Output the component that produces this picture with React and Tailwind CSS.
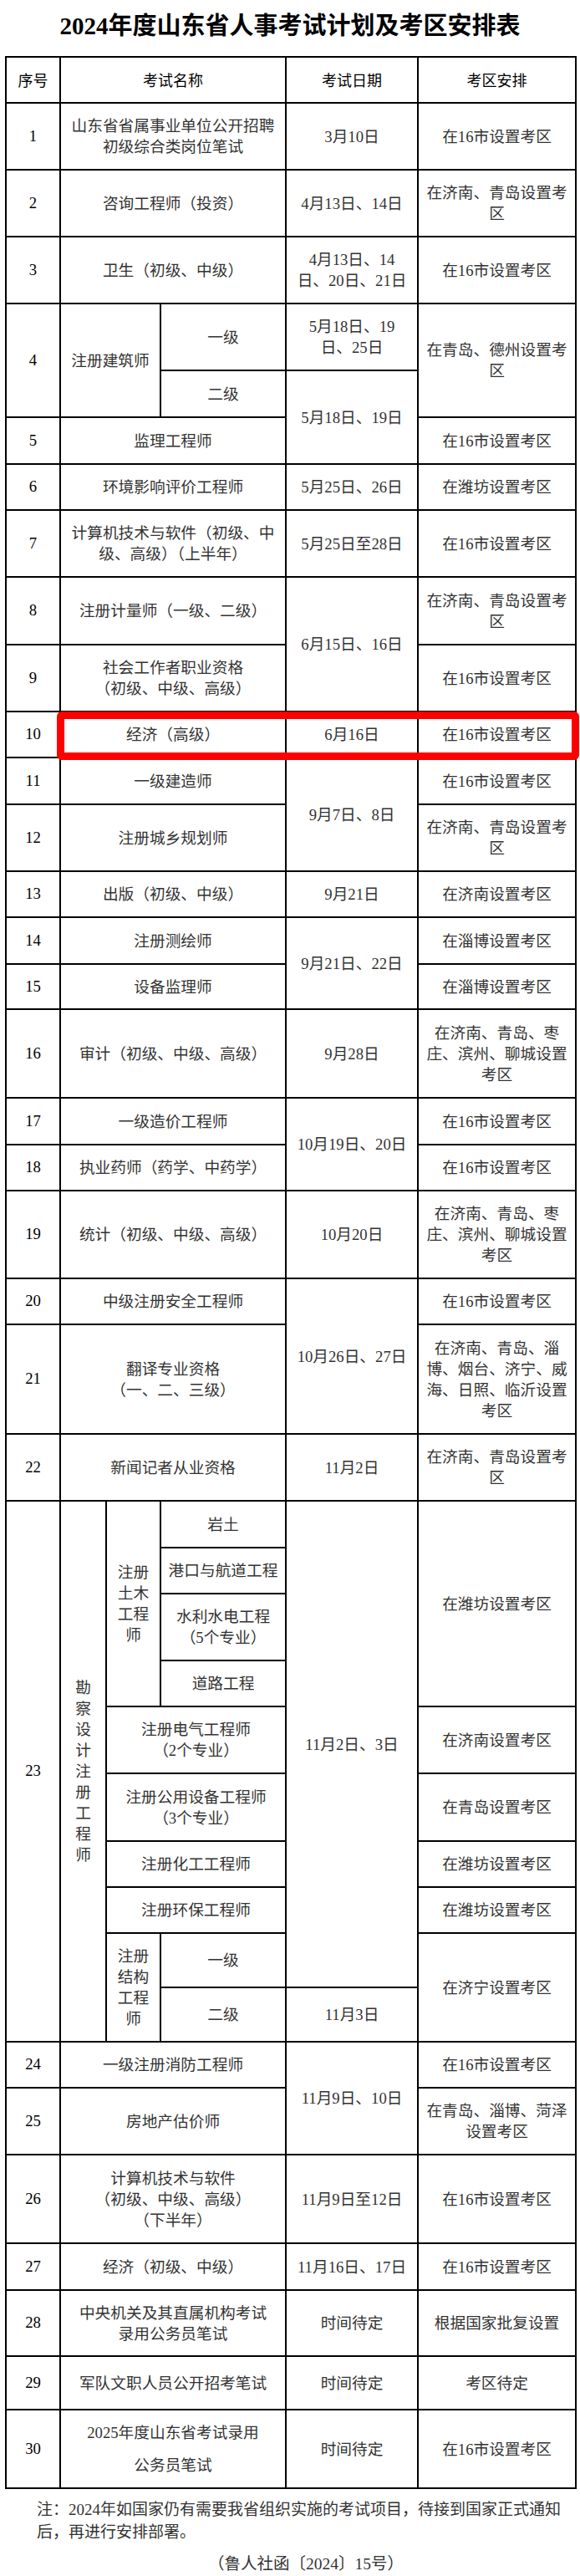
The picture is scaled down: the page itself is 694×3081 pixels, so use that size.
import { Fragment } from 'react';

const font = "[font-family:'Liberation_Serif','Noto_Sans_CJK_SC',serif]";
const td = 'border-2 border-black text-center align-middle px-[4px] leading-[25px] text-[18.7px] text-[#333] whitespace-nowrap';
const tdWide = 'border-2 border-black text-center align-middle px-[4px] leading-[39px] text-[18.7px] text-[#333] whitespace-nowrap';
const no = 'border-2 border-black text-center align-middle text-[18.7px] text-black';
const head = "border-2 border-black text-center align-middle text-[18px] font-normal text-black [font-family:'Noto_Sans_CJK_SC',sans-serif]";

function Lines({ items }) {
  return items.map((l, i) => (
    <Fragment key={i}>
      {i > 0 && <br />}
      {l}
    </Fragment>
  ));
}

const jiQing = ['在济南、青岛设置考', '区'];
const fiveCity = ['在济南、青岛、枣', '庄、滨州、聊城设置', '考区'];

export default function App() {
  return (
    <div className={`w-[694px] min-h-[3081px] bg-white ${font}`}>
      <h1 className="text-center text-[29px] font-bold leading-[35px] pt-[14px] pb-[18px] text-black">
        2024年度山东省人事考试计划及考区安排表
      </h1>

      <table className="ml-[6px] w-[682px] table-fixed border-collapse">
        <colgroup>
          <col className="w-[65px]" />
          <col className="w-[55px]" />
          <col className="w-[65px]" />
          <col className="w-[150px]" />
          <col className="w-[158px]" />
          <col className="w-[189px]" />
        </colgroup>
        <thead>
          <tr className="h-[55px]">
            <th className={head}>序号</th>
            <th colSpan={3} className={head}>考试名称</th>
            <th className={head}>考试日期</th>
            <th className={head}>考区安排</th>
          </tr>
        </thead>
        <tbody>
          <tr className="h-[80px]">
            <td className={no}>1</td>
            <td colSpan={3} className={td}><Lines items={['山东省省属事业单位公开招聘', '初级综合类岗位笔试']} /></td>
            <td className={td}>3月10日</td>
            <td className={td}>在16市设置考区</td>
          </tr>
          <tr className="h-[80px]">
            <td className={no}>2</td>
            <td colSpan={3} className={td}>咨询工程师（投资）</td>
            <td className={td}>4月13日、14日</td>
            <td className={td}><Lines items={jiQing} /></td>
          </tr>
          <tr className="h-[80px]">
            <td className={no}>3</td>
            <td colSpan={3} className={td}>卫生（初级、中级）</td>
            <td className={td}><Lines items={['4月13日、14', '日、20日、21日']} /></td>
            <td className={td}>在16市设置考区</td>
          </tr>
          <tr className="h-[80px]">
            <td rowSpan={2} className={no}>4</td>
            <td rowSpan={2} colSpan={2} className={td}>注册建筑师</td>
            <td className={td}>一级</td>
            <td className={td}><Lines items={['5月18日、19', '日、25日']} /></td>
            <td rowSpan={2} className={td}><Lines items={['在青岛、德州设置考', '区']} /></td>
          </tr>
          <tr className="h-[56px]">
            <td className={td}>二级</td>
            <td rowSpan={2} className={td}>5月18日、19日</td>
          </tr>
          <tr className="h-[56px]">
            <td className={no}>5</td>
            <td colSpan={3} className={td}>监理工程师</td>
            <td className={td}>在16市设置考区</td>
          </tr>
          <tr className="h-[55px]">
            <td className={no}>6</td>
            <td colSpan={3} className={td}>环境影响评价工程师</td>
            <td className={td}>5月25日、26日</td>
            <td className={td}>在潍坊设置考区</td>
          </tr>
          <tr className="h-[80px]">
            <td className={no}>7</td>
            <td colSpan={3} className={td}><Lines items={['计算机技术与软件（初级、中', '级、高级）（上半年）']} /></td>
            <td className={td}>5月25日至28日</td>
            <td className={td}>在16市设置考区</td>
          </tr>
          <tr className="h-[81px]">
            <td className={no}>8</td>
            <td colSpan={3} className={td}>注册计量师（一级、二级）</td>
            <td rowSpan={2} className={td}>6月15日、16日</td>
            <td className={td}><Lines items={jiQing} /></td>
          </tr>
          <tr className="h-[80px]">
            <td className={no}>9</td>
            <td colSpan={3} className={td}><Lines items={['社会工作者职业资格', '（初级、中级、高级）']} /></td>
            <td className={td}>在16市设置考区</td>
          </tr>
          <tr className="h-[55px]">
            <td className={no}>10</td>
            <td colSpan={3} className={`${td} relative`}>
              经济（高级）
              <div className="absolute left-[-5px] top-[-1px] z-10 h-[58px] w-[625px] rounded-[6px] border-[9px] border-[#ff0000] pointer-events-none" />
            </td>
            <td className={td}>6月16日</td>
            <td className={td}>在16市设置考区</td>
          </tr>
          <tr className="h-[56px]">
            <td className={no}>11</td>
            <td colSpan={3} className={td}>一级建造师</td>
            <td rowSpan={2} className={td}>9月7日、8日</td>
            <td className={td}>在16市设置考区</td>
          </tr>
          <tr className="h-[80px]">
            <td className={no}>12</td>
            <td colSpan={3} className={td}>注册城乡规划师</td>
            <td className={td}><Lines items={jiQing} /></td>
          </tr>
          <tr className="h-[55px]">
            <td className={no}>13</td>
            <td colSpan={3} className={td}>出版（初级、中级）</td>
            <td className={td}>9月21日</td>
            <td className={td}>在济南设置考区</td>
          </tr>
          <tr className="h-[56px]">
            <td className={no}>14</td>
            <td colSpan={3} className={td}>注册测绘师</td>
            <td rowSpan={2} className={td}>9月21日、22日</td>
            <td className={td}>在淄博设置考区</td>
          </tr>
          <tr className="h-[54px]">
            <td className={no}>15</td>
            <td colSpan={3} className={td}>设备监理师</td>
            <td className={td}>在淄博设置考区</td>
          </tr>
          <tr className="h-[106px]">
            <td className={no}>16</td>
            <td colSpan={3} className={td}>审计（初级、中级、高级）</td>
            <td className={td}>9月28日</td>
            <td className={td}><Lines items={fiveCity} /></td>
          </tr>
          <tr className="h-[56px]">
            <td className={no}>17</td>
            <td colSpan={3} className={td}>一级造价工程师</td>
            <td rowSpan={2} className={td}>10月19日、20日</td>
            <td className={td}>在16市设置考区</td>
          </tr>
          <tr className="h-[55px]">
            <td className={no}>18</td>
            <td colSpan={3} className={td}>执业药师（药学、中药学）</td>
            <td className={td}>在16市设置考区</td>
          </tr>
          <tr className="h-[105px]">
            <td className={no}>19</td>
            <td colSpan={3} className={td}>统计（初级、中级、高级）</td>
            <td className={td}>10月20日</td>
            <td className={td}><Lines items={fiveCity} /></td>
          </tr>
          <tr className="h-[55px]">
            <td className={no}>20</td>
            <td colSpan={3} className={td}>中级注册安全工程师</td>
            <td rowSpan={2} className={td}>10月26日、27日</td>
            <td className={td}>在16市设置考区</td>
          </tr>
          <tr className="h-[131px]">
            <td className={no}>21</td>
            <td colSpan={3} className={td}><Lines items={['翻译专业资格', '（一、二、三级）']} /></td>
            <td className={td}><Lines items={['在济南、青岛、淄', '博、烟台、济宁、威', '海、日照、临沂设置', '考区']} /></td>
          </tr>
          <tr className="h-[80px]">
            <td className={no}>22</td>
            <td colSpan={3} className={td}>新闻记者从业资格</td>
            <td className={td}>11月2日</td>
            <td className={td}><Lines items={jiQing} /></td>
          </tr>

          <tr className="h-[56px]">
            <td rowSpan={10} className={no}>23</td>
            <td rowSpan={10} className={td}><Lines items={['勘', '察', '设', '计', '注', '册', '工', '程', '师']} /></td>
            <td rowSpan={4} className={td}><Lines items={['注册', '土木', '工程', '师']} /></td>
            <td className={td}>岩土</td>
            <td rowSpan={9} className={td}>11月2日、3日</td>
            <td rowSpan={4} className={td}>在潍坊设置考区</td>
          </tr>
          <tr className="h-[55px]">
            <td className={td}>港口与航道工程</td>
          </tr>
          <tr className="h-[80px]">
            <td className={td}><Lines items={['水利水电工程', '（5个专业）']} /></td>
          </tr>
          <tr className="h-[55px]">
            <td className={td}>道路工程</td>
          </tr>
          <tr className="h-[80px]">
            <td colSpan={2} className={td}><Lines items={['注册电气工程师', '（2个专业）']} /></td>
            <td className={td}>在济南设置考区</td>
          </tr>
          <tr className="h-[81px]">
            <td colSpan={2} className={td}><Lines items={['注册公用设备工程师', '（3个专业）']} /></td>
            <td className={td}>在青岛设置考区</td>
          </tr>
          <tr className="h-[55px]">
            <td colSpan={2} className={td}>注册化工工程师</td>
            <td className={td}>在潍坊设置考区</td>
          </tr>
          <tr className="h-[55px]">
            <td colSpan={2} className={td}>注册环保工程师</td>
            <td className={td}>在潍坊设置考区</td>
          </tr>
          <tr className="h-[65px]">
            <td rowSpan={2} className={td}><Lines items={['注册', '结构', '工程', '师']} /></td>
            <td className={td}>一级</td>
            <td rowSpan={2} className={td}>在济宁设置考区</td>
          </tr>
          <tr className="h-[65px]">
            <td className={td}>二级</td>
            <td className={td}>11月3日</td>
          </tr>

          <tr className="h-[55px]">
            <td className={no}>24</td>
            <td colSpan={3} className={td}>一级注册消防工程师</td>
            <td rowSpan={2} className={td}>11月9日、10日</td>
            <td className={td}>在16市设置考区</td>
          </tr>
          <tr className="h-[80px]">
            <td className={no}>25</td>
            <td colSpan={3} className={td}>房地产估价师</td>
            <td className={td}><Lines items={['在青岛、淄博、菏泽', '设置考区']} /></td>
          </tr>
          <tr className="h-[106px]">
            <td className={no}>26</td>
            <td colSpan={3} className={td}><Lines items={['计算机技术与软件', '（初级、中级、高级）', '（下半年）']} /></td>
            <td className={td}>11月9日至12日</td>
            <td className={td}>在16市设置考区</td>
          </tr>
          <tr className="h-[56px]">
            <td className={no}>27</td>
            <td colSpan={3} className={td}>经济（初级、中级）</td>
            <td className={td}>11月16日、17日</td>
            <td className={td}>在16市设置考区</td>
          </tr>
          <tr className="h-[79px]">
            <td className={no}>28</td>
            <td colSpan={3} className={td}><Lines items={['中央机关及其直属机构考试', '录用公务员笔试']} /></td>
            <td className={td}>时间待定</td>
            <td className={td}>根据国家批复设置</td>
          </tr>
          <tr className="h-[64px]">
            <td className={no}>29</td>
            <td colSpan={3} className={td}>军队文职人员公开招考笔试</td>
            <td className={td}>时间待定</td>
            <td className={td}>考区待定</td>
          </tr>
          <tr className="h-[94px]">
            <td className={no}>30</td>
            <td colSpan={3} className={tdWide}><Lines items={['2025年度山东省考试录用', '公务员笔试']} /></td>
            <td className={td}>时间待定</td>
            <td className={td}>在16市设置考区</td>
          </tr>
        </tbody>
      </table>

      <p className="mt-[11px] pl-[44px] text-[19px] leading-[27px] text-[#333] whitespace-nowrap">
        注：2024年如国家仍有需要我省组织实施的考试项目，待接到国家正式通知
        <br />
        后，再进行安排部署。
      </p>
      <p className="mt-[10px] pl-[38px] text-center text-[19.5px] leading-[30px] text-[#333]">
        （鲁人社函〔2024〕15号）
      </p>
    </div>
  );
}
